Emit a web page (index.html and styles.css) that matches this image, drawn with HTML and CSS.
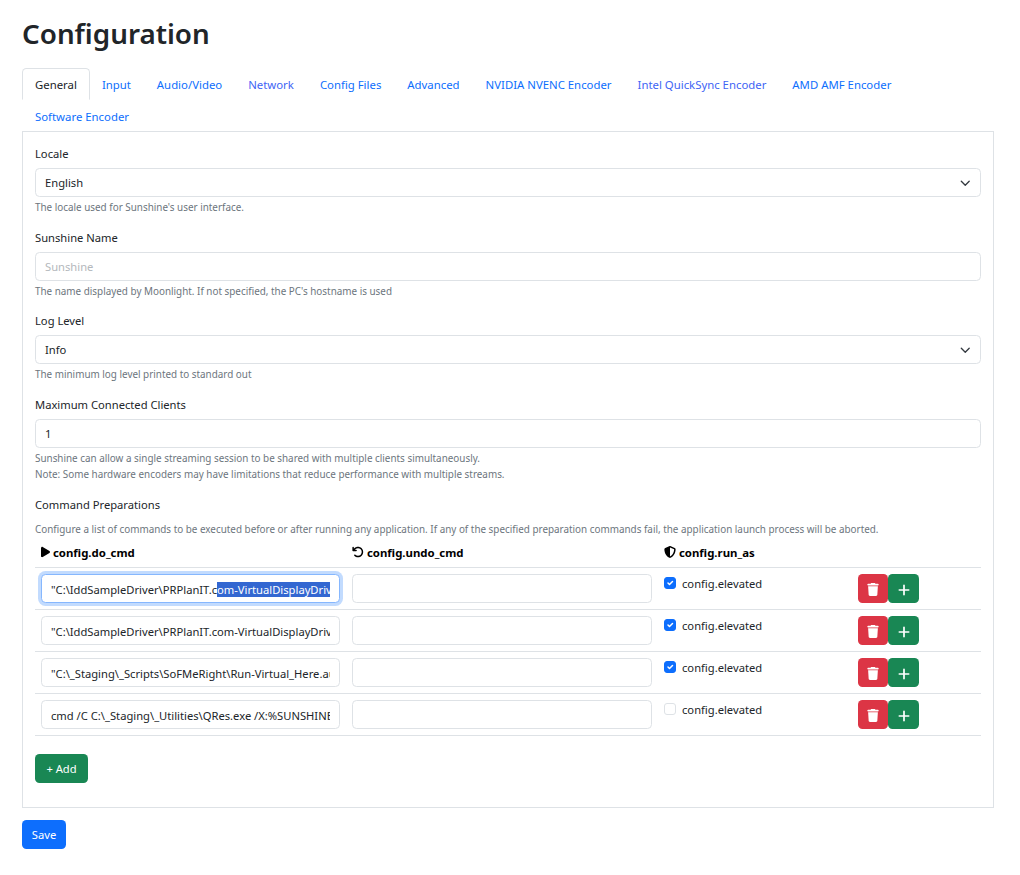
FILE: index.html
```html
<!DOCTYPE html>
<html lang="en">
<head>
    <meta charset="UTF-8">
    <meta name="viewport" content="width=device-width, initial-scale=1.0">
    <title>Configuration</title>
    <link rel="stylesheet" href="styles.css">
</head>
<body>
    <div class="container">
        <h1>Configuration</h1>
        <ul class="tabs">
            <li><a class="tab active" href="#">General</a></li>
            <li><a class="tab" href="#">Input</a></li>
            <li><a class="tab" href="#">Audio/Video</a></li>
            <li><a class="tab visited" href="#">Network</a></li>
            <li><a class="tab" href="#">Config Files</a></li>
            <li><a class="tab" href="#">Advanced</a></li>
            <li><a class="tab" href="#">NVIDIA NVENC Encoder</a></li>
            <li><a class="tab visited" href="#">Intel QuickSync Encoder</a></li>
            <li><a class="tab" href="#">AMD AMF Encoder</a></li>
            <li><a class="tab" href="#">Software Encoder</a></li>
        </ul>
        <div class="panel">
            <div class="field">
                <label>Locale</label>
                <div class="control select">English
                    <svg class="chevron" viewBox="0 0 16 16"><path fill="none" stroke="#343a40" stroke-linecap="round" stroke-linejoin="round" stroke-width="2" d="M2 5l6 6 6-6"/></svg>
                </div>
                <div class="hint">The locale used for Sunshine's user interface.</div>
            </div>
            <div class="field">
                <label>Sunshine Name</label>
                <input class="control" type="text" placeholder="Sunshine">
                <div class="hint">The name displayed by Moonlight. If not specified, the PC's hostname is used</div>
            </div>
            <div class="field">
                <label>Log Level</label>
                <div class="control select">Info
                    <svg class="chevron" viewBox="0 0 16 16"><path fill="none" stroke="#343a40" stroke-linecap="round" stroke-linejoin="round" stroke-width="2" d="M2 5l6 6 6-6"/></svg>
                </div>
                <div class="hint">The minimum log level printed to standard out</div>
            </div>
            <div class="field">
                <label>Maximum Connected Clients</label>
                <input class="control" type="text" value="1">
                <div class="hint">Sunshine can allow a single streaming session to be shared with multiple clients simultaneously.<br>Note: Some hardware encoders may have limitations that reduce performance with multiple streams.</div>
            </div>
            <div class="field">
                <label class="label-wide">Command Preparations</label>
                <div class="hint">Configure a list of commands to be executed before or after running any application. If any of the specified preparation commands fail, the application launch process will be aborted.</div>
                <table class="commands">
                    <thead>
                        <tr>
                            <th class="col-do"><svg class="icon icon-play" viewBox="0 0 384 512"><path d="M73 39c-14.800-9.100-33.400-9.400-48.500-.9S0 62.600 0 80V432c0 17.400 9.400 33.400 24.500 41.900s33.700 8.100 48.500-.9L361 297c14.300-8.700 23-24.200 23-41s-8.700-32.200-23-41L73 39z"/></svg> config.do_cmd</th>
                            <th class="col-undo"><svg class="icon" viewBox="0 0 512 512"><path d="M125.700 160H176c17.700 0 32 14.300 32 32s-14.300 32-32 32H48c-17.700 0-32-14.300-32-32V64c0-17.700 14.300-32 32-32s32 14.300 32 32v51.200L97.600 97.600c87.500-87.500 229.300-87.500 316.800 0s87.500 229.300 0 316.800s-229.300 87.500-316.800 0c-12.500-12.500-12.500-32.800 0-45.300s32.800-12.500 45.300 0c62.500 62.500 163.800 62.500 226.300 0s62.500-163.800 0-226.300s-163.800-62.500-226.300 0L125.700 160z"/></svg> config.undo_cmd</th>
                            <th class="col-run"><svg class="icon" viewBox="0 0 512 512"><path d="M256 0c4.600 0 9.200 1 13.400 2.900L457.700 82.800c22 9.300 38.400 31 38.300 57.200c-.5 99.200-41.300 280.700-213.600 363.200c-16.700 8-36.100 8-52.800 0C57.300 420.700 16.500 239.200 16 140c-.1-26.200 16.300-47.900 38.300-57.200L242.700 2.900C246.800 1 251.400 0 256 0zm0 66.800V444.800C394 378 431.100 230.100 432 141.400L256 66.800z"/></svg> config.run_as</th>
                            <th class="col-actions"></th>
                        </tr>
                    </thead>
                    <tbody>
                        <tr>
                            <td><input id="firstCmd" class="control cmd" type="text" value='"C:\IddSampleDriver\PRPlanIT.com-VirtualDisplayDriver\enable.bat"'></td>
                            <td><input class="control cmd" type="text"></td>
                            <td><div class="check"><span class="box checked"><svg viewBox="0 0 20 20"><path fill="none" stroke="#fff" stroke-linecap="round" stroke-linejoin="round" stroke-width="3" d="M6 10l3 3 6-6"/></svg></span>config.elevated</div></td>
                            <td><div class="actions">
                                <button class="btn danger"><svg class="btn-icon trash" viewBox="0 0 448 512"><path d="M135.200 17.700L128 32H32C14.300 32 0 46.300 0 64S14.300 96 32 96H416c17.700 0 32-14.300 32-32s-14.300-32-32-32H320l-7.200-14.300C307.400 6.800 296.300 0 284.200 0H163.800c-12.100 0-23.200 6.800-28.600 17.700zM416 128H32L53.200 467c1.600 25.300 22.600 45 47.900 45H346.900c25.300 0 46.300-19.700 47.900-45L416 128z"/></svg></button>
                                <button class="btn success"><svg class="btn-icon plus" viewBox="0 0 448 512"><path d="M256 80c0-17.700-14.300-32-32-32s-32 14.300-32 32V224H48c-17.700 0-32 14.300-32 32s14.300 32 32 32H192V432c0 17.700 14.300 32 32 32s32-14.300 32-32V288H400c17.700 0 32-14.300 32-32s-14.300-32-32-32H256V80z"/></svg></button>
                            </div></td>
                        </tr>
                        <tr>
                            <td><input class="control cmd" type="text" value='"C:\IddSampleDriver\PRPlanIT.com-VirtualDisplayDriver\enable.bat"'></td>
                            <td><input class="control cmd" type="text"></td>
                            <td><div class="check"><span class="box checked"><svg viewBox="0 0 20 20"><path fill="none" stroke="#fff" stroke-linecap="round" stroke-linejoin="round" stroke-width="3" d="M6 10l3 3 6-6"/></svg></span>config.elevated</div></td>
                            <td><div class="actions">
                                <button class="btn danger"><svg class="btn-icon trash" viewBox="0 0 448 512"><path d="M135.200 17.700L128 32H32C14.300 32 0 46.300 0 64S14.300 96 32 96H416c17.700 0 32-14.300 32-32s-14.300-32-32-32H320l-7.200-14.300C307.400 6.800 296.300 0 284.200 0H163.800c-12.100 0-23.200 6.800-28.600 17.700zM416 128H32L53.200 467c1.600 25.300 22.600 45 47.900 45H346.900c25.300 0 46.300-19.700 47.900-45L416 128z"/></svg></button>
                                <button class="btn success"><svg class="btn-icon plus" viewBox="0 0 448 512"><path d="M256 80c0-17.700-14.300-32-32-32s-32 14.300-32 32V224H48c-17.700 0-32 14.300-32 32s14.300 32 32 32H192V432c0 17.700 14.300 32 32 32s32-14.300 32-32V288H400c17.700 0 32-14.300 32-32s-14.300-32-32-32H256V80z"/></svg></button>
                            </div></td>
                        </tr>
                        <tr>
                            <td><input class="control cmd" type="text" value='"C:\_Staging\_Scripts\SoFMeRight\Run-Virtual_Here.au3"'></td>
                            <td><input class="control cmd" type="text"></td>
                            <td><div class="check"><span class="box checked"><svg viewBox="0 0 20 20"><path fill="none" stroke="#fff" stroke-linecap="round" stroke-linejoin="round" stroke-width="3" d="M6 10l3 3 6-6"/></svg></span>config.elevated</div></td>
                            <td><div class="actions">
                                <button class="btn danger"><svg class="btn-icon trash" viewBox="0 0 448 512"><path d="M135.200 17.700L128 32H32C14.300 32 0 46.300 0 64S14.300 96 32 96H416c17.700 0 32-14.300 32-32s-14.300-32-32-32H320l-7.200-14.300C307.400 6.800 296.300 0 284.200 0H163.800c-12.100 0-23.200 6.800-28.600 17.700zM416 128H32L53.200 467c1.600 25.300 22.600 45 47.900 45H346.900c25.300 0 46.300-19.700 47.900-45L416 128z"/></svg></button>
                                <button class="btn success"><svg class="btn-icon plus" viewBox="0 0 448 512"><path d="M256 80c0-17.700-14.300-32-32-32s-32 14.300-32 32V224H48c-17.700 0-32 14.300-32 32s14.300 32 32 32H192V432c0 17.700 14.300 32 32 32s32-14.300 32-32V288H400c17.700 0 32-14.300 32-32s-14.300-32-32-32H256V80z"/></svg></button>
                            </div></td>
                        </tr>
                        <tr>
                            <td><input class="control cmd" type="text" value="cmd /C C:\_Staging\_Utilities\QRes.exe /X:%SUNSHINE_CLIENT_WIDTH%"></td>
                            <td><input class="control cmd" type="text"></td>
                            <td><div class="check"><span class="box"></span>config.elevated</div></td>
                            <td><div class="actions">
                                <button class="btn danger"><svg class="btn-icon trash" viewBox="0 0 448 512"><path d="M135.200 17.700L128 32H32C14.300 32 0 46.300 0 64S14.300 96 32 96H416c17.700 0 32-14.300 32-32s-14.300-32-32-32H320l-7.200-14.300C307.400 6.800 296.300 0 284.200 0H163.800c-12.100 0-23.200 6.800-28.600 17.700zM416 128H32L53.200 467c1.600 25.300 22.600 45 47.900 45H346.900c25.300 0 46.300-19.700 47.900-45L416 128z"/></svg></button>
                                <button class="btn success"><svg class="btn-icon plus" viewBox="0 0 448 512"><path d="M256 80c0-17.700-14.300-32-32-32s-32 14.300-32 32V224H48c-17.700 0-32 14.300-32 32s14.300 32 32 32H192V432c0 17.700 14.300 32 32 32s32-14.300 32-32V288H400c17.700 0 32-14.300 32-32s-14.300-32-32-32H256V80z"/></svg></button>
                            </div></td>
                        </tr>
                    </tbody>
                </table>
                <button class="btn success add">+ Add</button>
            </div>
        </div>
        <button class="btn primary save">Save</button>
    </div>

    <script>
        // first command is focused with the tail of the path selected
        const cmd = document.getElementById("firstCmd");
        cmd.focus();
        cmd.setSelectionRange(cmd.value.indexOf("om-Virtual"), cmd.value.length);
        cmd.scrollLeft = 0;
    </script>
</body>
</html>
```

FILE: styles.css
```css
* {
    box-sizing: border-box;
}

body {
    margin: 0;
    font-family: "Noto Sans", Arial, sans-serif;
    font-size: 11.2px;
    line-height: 18px;
    color: #212529;
    background-color: #fff;
}

.container {
    padding: 0 26px 0 22px;
}

h1 {
    margin: 0;
    padding-top: 15px;
    height: 68px;
    font-size: 27.800px;
    line-height: 36px;
    font-weight: 600;
}

.tabs {
    display: flex;
    flex-wrap: wrap;
    margin: 0;
    padding: 0;
    list-style: none;
}

.tab {
    display: block;
    padding: 7px 12px 5px;
    border: 1px solid transparent;
    border-radius: 4.500px 4.500px 0 0;
    font-size: 11.360px;
    color: #0d6efd;
    text-decoration: none;
}

.tab.visited {
    color: #4164f5;
}

.tab.active {
    margin-right: -1px;
    color: #212529;
    background-color: #fff;
    border-color: #dee2e6 #dee2e6 #fff;
}

.panel {
    margin-top: -1px;
    padding: 12px 12px 24px;
    border: 1px solid #dee2e6;
}

.field {
    margin-bottom: 11.900px;
}

.field:last-child {
    margin-bottom: 0;
}

label {
    display: block;
    padding-top: 1px;
    margin-bottom: 5px;
}

.label-wide {
    padding-top: 2px;
    margin-bottom: 8px;
}

.control {
    display: block;
    width: 100%;
    height: 29px;
    padding: 5px 9px 4px;
    border: 1px solid #dee2e6;
    border-radius: 4.500px;
    font: inherit;
    color: #212529;
    background-color: #fff;
    outline: none;
}

.control::placeholder {
    color: #b4b8bc;
}

.control:focus {
    border-color: #86b7fe;
    box-shadow: 0 0 0 3px rgba(13, 110, 253, 0.25);
}

.control::selection {
    color: #fff;
    background-color: #3367d1;
}

.select {
    position: relative;
}

.chevron {
    position: absolute;
    top: 8.500px;
    right: 10px;
    width: 10.500px;
    height: 10.500px;
}

.hint {
    margin-top: 3px;
    font-size: 9.900px;
    line-height: 15.750px;
    color: #6c757d;
}

.commands {
    width: 100%;
    margin-bottom: 12px;
    border-collapse: collapse;
    table-layout: fixed;
}

.commands th {
    padding: 6px 6px 5px;
    text-align: left;
    font-size: 11.400px;
    font-weight: 700;
    color: #000;
    border-bottom: 1px solid #dee2e6;
}

.commands td {
    padding: 6px;
    height: 42px;
    vertical-align: top;
    border-bottom: 1px solid #dee2e6;
}

.col-do {
    width: 311px;
}

.col-undo {
    width: 312px;
}

.col-run {
    width: 194px;
}

.icon {
    width: 12px;
    height: 12px;
    vertical-align: -1px;
}

.icon-play {
    width: 9px;
}

.check {
    display: flex;
    align-items: flex-start;
    gap: 6px;
    padding-top: 1px;
}

.box {
    width: 12px;
    height: 12px;
    margin-top: 2px;
    border: 1px solid #dee2e6;
    border-radius: 3px;
    background-color: #fff;
}

.box.checked {
    border-color: #0d6efd;
    background-color: #0d6efd;
}

.box svg {
    display: block;
    width: 100%;
    height: 100%;
}

.actions {
    display: flex;
}

.btn {
    display: inline-block;
    height: 29px;
    padding: 4.500px 9px;
    border: 1px solid transparent;
    border-radius: 4.500px;
    font: inherit;
    color: #fff;
    cursor: pointer;
}

.btn.danger {
    background-color: #dc3545;
}

.btn.success {
    background-color: #198754;
}

.btn.primary {
    background-color: #0d6efd;
}

.actions .btn {
    width: 31px;
    padding: 2px 0 0;
    display: flex;
    align-items: center;
    justify-content: center;
}

.actions .danger {
    width: 30px;
}

.btn-icon {
    fill: #fff;
}

.trash {
    width: 12px;
    height: 13px;
}

.plus {
    width: 12px;
    height: 14px;
}

.add {
    display: block;
    width: 53px;
    padding: 0;
    margin-top: 18px;
}

.save {
    display: block;
    width: 44px;
    padding: 0;
    margin-top: 12px;
}
```
